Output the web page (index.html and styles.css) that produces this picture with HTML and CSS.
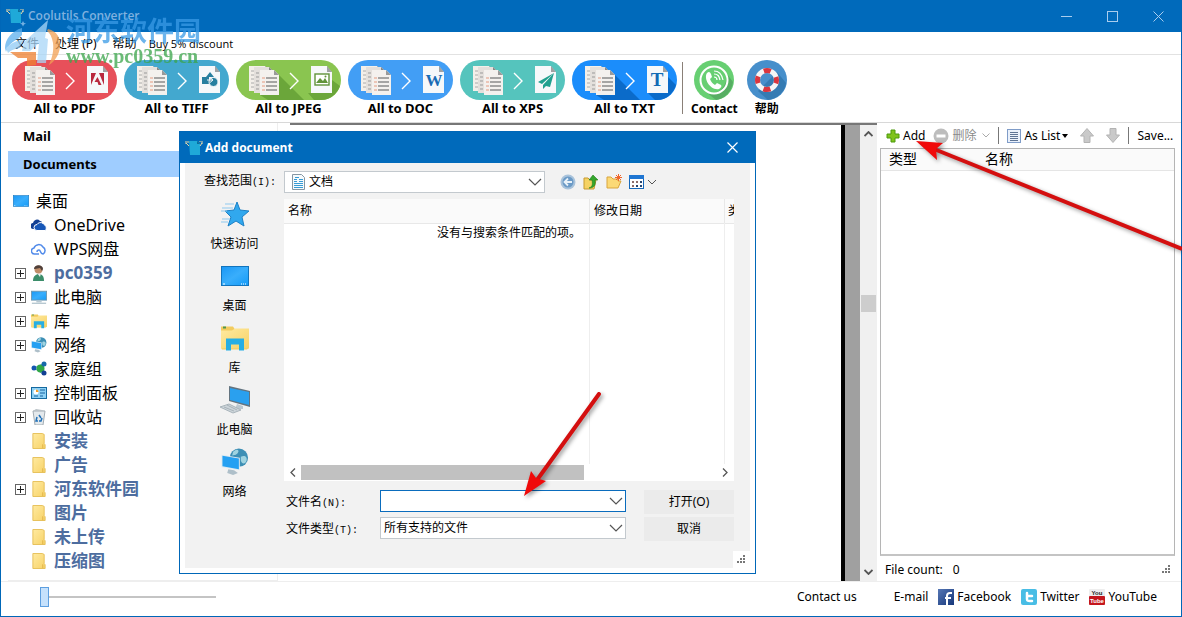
FILE: index.html
```
<!DOCTYPE html>
<html lang="zh-CN">
<head>
  <meta charset="UTF-8">
  <title>Coolutils Converter</title>
  <meta name="viewport" content="width=device-width, initial-scale=1.0">
  <link rel="stylesheet" href="styles.css">
</head>
<body>
  <!-- shared icons -->
  <svg class="sprite" aria-hidden="true">
    <defs>
      <linearGradient id="gBlue" x1="0" y1="0" x2="1" y2="1">
        <stop offset="0" stop-color="#1a97f5"/><stop offset=".5" stop-color="#39aefc"/><stop offset="1" stop-color="#149bf8"/>
      </linearGradient>
      <linearGradient id="gFolder" x1="0" y1="0" x2="1" y2="1">
        <stop offset="0" stop-color="#ffeaa0"/><stop offset="1" stop-color="#f7d267"/>
      </linearGradient>
      <linearGradient id="gFb" x1="0" y1="0" x2="1" y2="1">
        <stop offset="0" stop-color="#5677b5"/><stop offset="1" stop-color="#16377a"/>
      </linearGradient>
    </defs>
    <symbol id="pages" viewBox="0 0 32 32">
      <path d="M1 1h16l4 4v21H1z" fill="#f3efe9"/>
      <path d="M17 1l4 4h-4z" fill="#999"/>
      <path d="M3 6h3M3 10h3M3 14h3M3 18h3M3 22h3" stroke="#aaa" stroke-width="1"/>
      <path d="M6 2h15l4 4v22H6z" fill="#e4e0dc"/>
      <path d="M21 2l4 4h-4z" fill="#888"/>
      <path d="M8 8h3M8 12h3M8 16h3M8 20h3M8 24h3" stroke="#999" stroke-width="1"/>
      <path d="M12 5h14l5 5v20H12z" fill="#f4f1ee"/>
      <path d="M26 5l5 5h-5z" fill="#9a9a9a"/>
      <path d="M14 13h3M14 17h3M14 21h3M14 25h3" stroke="#e49a80" stroke-width="1"/>
      <path d="M18 13h11M18 17h11M18 21h11M18 25h11" stroke="#8c8c8c" stroke-width="1.6"/>
    </symbol>
    <symbol id="sheet" viewBox="0 0 21 27">
      <path d="M0 0h16l5 6v21H0z" fill="#f6f8fa"/>
      <path d="M16 0l5 6h-5z" fill="#000" opacity=".35"/>
    </symbol>
    <symbol id="app" viewBox="0 0 18 18">
      <path d="M4 2h8l3 3v11H5z" fill="#1fa9d8"/>
      <path d="M12 2l3 3h-3z" fill="#0b6f9c"/>
      <path d="M4 7L1 4M15 7l2-3M1 2v3M3 2v2M17 2v3M15 2v1" stroke="#e8d9a8" stroke-width="1" fill="none"/>
    </symbol>
    <symbol id="desktop" viewBox="0 0 28 20">
      <rect x=".5" y=".5" width="27" height="19" fill="url(#gBlue)" stroke="#1274bd"/>
      <path d="M2 18h2M20 18h1M22 18h1M24 18h1" stroke="#fff"/>
    </symbol>
    <symbol id="library" viewBox="0 0 28 25">
      <path d="M0 1h12l2 3h14v18l-2 2H1l-1-2z" fill="#f2cb5e"/>
      <path d="M0 5h11l3-2h14v20H0z" fill="url(#gFolder)"/>
      <path d="M2 2h3" stroke="#4f9650" stroke-width="2"/>
      <path d="M5 13h18v12h-5v-6h-8v6H5z" fill="#27aee3"/>
    </symbol>
    <symbol id="monitor" viewBox="0 0 18 16">
      <rect x=".5" y="1.5" width="17" height="10" fill="url(#gBlue)" stroke="#6f96ad"/>
      <path d="M6 12h6v2H6z" fill="#b8c8d2"/><path d="M1 15h16" stroke="#8fa9b8"/>
    </symbol>
    <symbol id="folder" viewBox="0 0 14 17">
      <path d="M.5.5h10l2 1v10l1 1v4H.5z" fill="url(#gFolder)" stroke="#e5be55"/>
      <path d="M11 12v4" stroke="#e0b144"/>
    </symbol>
    <symbol id="chevron" viewBox="0 0 14 8">
      <path d="M1 1l6 6 6-6" fill="none" stroke="#555" stroke-width="1.2"/>
    </symbol>
    <symbol id="netpc" viewBox="0 0 28 29">
      <circle cx="18" cy="10" r="9.5" fill="#3d8fb5"/>
      <path d="M12 4c4-4 7-2 5 1s-4 2-6 3zM20 9c4-2 7 0 6 4s-5 4-6 0z" fill="#9fd3e0"/>
      <path d="M0 7l19 3v13L0 20z" fill="#dceaf2"/>
      <path d="M1 8l17 3v11L1 19z" fill="#25a0f2"/>
      <path d="M7 22l6 1 4 3-5 2-6-2z" fill="#aebfc9"/>
    </symbol>
    <symbol id="grip" viewBox="0 0 9 9">
      <path d="M6 0h2v2H6zM3 3h2v2H3zM6 3h2v2H6zM0 6h2v2H0zM3 6h2v2H3zM6 6h2v2H6z" fill="#777"/>
    </symbol>
    <symbol id="move" viewBox="0 0 14 15">
      <path d="M7 .5L13.5 8H10v6.500H4V8H.5z" fill="#c9c9c9" stroke="#b3b3b3"/>
    </symbol>
  </svg>

  <div class="window">
    <header class="titlebar">
      <svg class="app-icon"><use href="#app"/></svg>
      <h1>Coolutils Converter</h1>
      <button class="win-btn" aria-label="Minimize"><svg width="11" height="11"><path d="M0 5.500h11" stroke="#a9cdee"/></svg></button>
      <button class="win-btn" aria-label="Maximize"><svg width="11" height="11"><rect x=".5" y=".5" width="10" height="10" fill="none" stroke="#a9cdee"/></svg></button>
      <button class="win-btn" aria-label="Close"><svg width="11" height="11"><path d="M.5.5l10 10M10.500.5l-10 10" stroke="#a9cdee"/></svg></button>
    </header>

    <nav class="menu">
      <button>文件</button>
      <button>处理 (P)</button>
      <button>帮助</button>
      <button class="promo">Buy 5% discount</button>
    </nav>

    <div class="toolbar">
      <button class="convert">
        <svg viewBox="0 0 105 40">
          <rect width="105" height="40" rx="20" fill="#e7505a"/>
          <use href="#pages" x="12" y="5" width="32" height="32"/>
          <path d="M54 13l8 8-8 8" fill="none" stroke="#fff" stroke-width="1.4"/>
          <use href="#sheet" x="75" y="6" width="21" height="27"/>
          <path d="M79 13h5l-5 12zM87 13h5v12zM85.500 17l4 8h-3l-1-3h-3z" fill="#b9283e"/>
        </svg>
        All to PDF
      </button>
      <button class="convert">
        <svg viewBox="0 0 105 40">
          <rect width="105" height="40" rx="20" fill="#43a8cf"/>
          <use href="#pages" x="12" y="5" width="32" height="32"/>
          <path d="M54 13l8 8-8 8" fill="none" stroke="#fff" stroke-width="1.4"/>
          <use href="#sheet" x="75" y="6" width="21" height="27"/>
          <path d="M78 17h7v7h-7zM82 17l4-5 4 5z" fill="#277f9f"/>
          <circle cx="89.500" cy="22" r="4.500" fill="#277f9f" stroke="#f6f8fa"/>
          <path d="M83 20h5M86 17.500l3 2.500-3 2.500" stroke="#f6f8fa" fill="none"/>
        </svg>
        All to TIFF
      </button>
      <button class="convert">
        <svg viewBox="0 0 105 40">
          <rect width="105" height="40" rx="20" fill="#8ac550"/>
          <path d="M43 15l25 25H32l-8-5 19-1zM96 20l8 6c-3 8-10 14-19 14h-7l-6-7h24z" fill="#6ba63a"/>
          <use href="#pages" x="12" y="5" width="32" height="32"/>
          <path d="M54 13l8 8-8 8" fill="none" stroke="#fff" stroke-width="1.4"/>
          <use href="#sheet" x="75" y="6" width="21" height="27"/>
          <rect x="79" y="14" width="14" height="11" fill="#fff" stroke="#60933a" stroke-width="1.400"/>
          <path d="M80 23l4-5 3 3 2-3 3 5z" fill="#60933a"/><circle cx="89.500" cy="16.500" r="1" fill="#60933a"/>
        </svg>
        All to JPEG
      </button>
      <button class="convert">
        <svg viewBox="0 0 105 40">
          <rect width="105" height="40" rx="20" fill="#429ef5"/>
          <use href="#pages" x="12" y="5" width="32" height="32"/>
          <path d="M54 13l8 8-8 8" fill="none" stroke="#fff" stroke-width="1.4"/>
          <use href="#sheet" x="75" y="6" width="21" height="27"/>
          <text class="glyph" x="86" y="26" font-size="17" fill="#1a6bb4">W</text>
        </svg>
        All to DOC
      </button>
      <button class="convert">
        <svg viewBox="0 0 105 40">
          <rect width="105" height="40" rx="20" fill="#55c4bd"/>
          <use href="#pages" x="12" y="5" width="32" height="32"/>
          <path d="M54 13l8 8-8 8" fill="none" stroke="#fff" stroke-width="1.4"/>
          <use href="#sheet" x="75" y="6" width="21" height="27"/>
          <path d="M94 13L78 22l4 2zM94 13L83 25v4l3-3 4 1z" fill="#21a08f"/>
        </svg>
        All to XPS
      </button>
      <button class="convert">
        <svg viewBox="0 0 105 40">
          <rect width="105" height="40" rx="20" fill="#1b8dfb"/>
          <path d="M43 15l25 25H32l-8-5 19-1zM96 17l8 8c-3 9-10 15-19 15h-2l-7-7h20z" fill="#0b6bc9"/>
          <use href="#pages" x="12" y="5" width="32" height="32"/>
          <path d="M54 13l8 8-8 8" fill="none" stroke="#fff" stroke-width="1.4"/>
          <use href="#sheet" x="75" y="6" width="21" height="27"/>
          <text class="glyph" x="85" y="26" font-size="19" fill="#126bb5">T</text>
        </svg>
        All to TXT
      </button>
      <div class="divider"></div>
      <button class="round">
        <svg viewBox="0 0 40 40">
          <circle cx="20" cy="20" r="20" fill="#67cf72"/>
          <path d="M33 14l6 8c-1 9-8 17-17 18l-10-8c10 4 21-3 21-18z" fill="#57ae63"/>
          <circle cx="20" cy="20" r="13.500" fill="none" stroke="#fff" stroke-width="2"/>
          <path d="M13 13c2-2 3-1 4 1l1 3-2 2c1 3 3 5 5 6l2-2 4 2c1 1 0 3-2 4-8 2-16-10-12-16z" fill="#fff"/>
          <path d="M20 17c2 0 3 1 3 3M20 14c4 0 5 2 6 6M20 11c6 0 8 4 9 9" fill="none" stroke="#fff" stroke-width="1.200"/>
        </svg>
        Contact
      </button>
      <button class="round">
        <svg viewBox="0 0 40 40">
          <circle cx="20" cy="20" r="20" fill="#478fcb"/>
          <path d="M30 12l9 11c-1 9-9 16-18 17l-10-9z" fill="#357bb3"/>
          <circle cx="20" cy="20" r="9.500" fill="none" stroke="#f5f5f5" stroke-width="5"/>
          <circle cx="20" cy="20" r="9.500" fill="none" stroke="#d9363f" stroke-width="5" stroke-dasharray="7 7.920" stroke-dashoffset="3.500"/>
        </svg>
        帮助
      </button>
    </div>

    <main class="workspace">
      <aside class="sidebar">
        <button class="tab">Mail</button>
        <button class="tab active">Documents</button>
        <ul class="tree">
          <li class="root"><svg width="16" height="12"><use href="#desktop"/></svg>桌面</li>
          <li><span class="toggle-space"></span><svg width="16" height="16" viewBox="0 0 16 16"><path d="M3 12a3 3 0 0 1-1-6 4 4 0 0 1 7-2 4 4 0 0 1 2 1L5 12z" fill="#123f93"/><path d="M6 13.500a3 3 0 0 1 0-6 4 4 0 0 1 6-1 3 3 0 0 1 2 2 3 3 0 0 1 0 5z" fill="#1757b8" stroke="#fff"/></svg>OneDrive</li>
          <li><span class="toggle-space"></span><svg width="16" height="16" viewBox="0 0 16 16"><path d="M8 13H4a3 3 0 0 1-1-6 5 5 0 0 1 9-1 4 4 0 0 1 0 7c-3 0-2-4-4-4s-2 2-2 2" fill="none" stroke="#528bea" stroke-width="1.500"/></svg>WPS网盘</li>
          <li class="strong"><button class="toggle" aria-label="展开"></button><svg width="16" height="16" viewBox="0 0 16 16"><path d="M2 16c0-5 3-7 6-7s5 2 5 7z" fill="#3b8d6a"/><path d="M6 8h4l-1 4z" fill="#eee"/><circle cx="7.500" cy="4.500" r="4" fill="#c08c68"/><path d="M3 4c0-5 9-5 9 0l-1 2-2-3-5 1z" fill="#50403a"/></svg>pc0359</li>
          <li><button class="toggle" aria-label="展开"></button><svg width="16" height="16"><use href="#monitor"/></svg>此电脑</li>
          <li><button class="toggle" aria-label="展开"></button><svg width="16" height="16"><use href="#library"/></svg>库</li>
          <li><button class="toggle" aria-label="展开"></button><svg width="16" height="16"><use href="#netpc"/></svg>网络</li>
          <li><span class="toggle-space"></span><svg width="16" height="16" viewBox="0 0 16 16"><path d="M3 7l9-4v10z" fill="none" stroke="#4c9bd0"/><circle cx="3" cy="7" r="2.500" fill="#1456b0"/><circle cx="9.500" cy="7.500" r="4" fill="#31a745"/><circle cx="13" cy="3" r="2.500" fill="#1768a8"/><circle cx="13" cy="12" r="2.500" fill="#123f93"/></svg>家庭组</li>
          <li><button class="toggle" aria-label="展开"></button><svg width="16" height="16" viewBox="0 0 16 16"><rect x=".5" y="2.500" width="15" height="11" fill="#8ed1f5" stroke="#15699f"/><circle cx="5" cy="7" r="2.500" fill="#fff"/><path d="M5 7V4.500A2.500 2.500 0 0 1 7.500 7z" fill="#f29a24"/><path d="M9 5h5M9 8h5M3 11h4M9 11h3" stroke="#1862a0"/></svg>控制面板</li>
          <li><button class="toggle" aria-label="展开"></button><svg width="16" height="16" viewBox="0 0 16 16"><path d="M2 2h12l-2 14H4z" fill="#e4e9ec" stroke="#a2acb3"/><path d="M2 2l3-2 6 1 3 1z" fill="#bac2c7"/><path d="M8 6l2 3M11 9l-1 3H8M7 12H5l1-4" fill="none" stroke="#2272b8" stroke-width="1.500"/></svg>回收站</li>
          <li class="strong"><span class="toggle-space"></span><svg width="16" height="16"><use href="#folder"/></svg>安装</li>
          <li class="strong"><span class="toggle-space"></span><svg width="16" height="16"><use href="#folder"/></svg>广告</li>
          <li class="strong"><button class="toggle" aria-label="展开"></button><svg width="16" height="16"><use href="#folder"/></svg>河东软件园</li>
          <li class="strong"><span class="toggle-space"></span><svg width="16" height="16"><use href="#folder"/></svg>图片</li>
          <li class="strong"><span class="toggle-space"></span><svg width="16" height="16"><use href="#folder"/></svg>未上传</li>
          <li class="strong"><span class="toggle-space"></span><svg width="16" height="16"><use href="#folder"/></svg>压缩图</li>
        </ul>
      </aside>

      <section class="preview">
        <div class="page"></div>
        <div class="page-edge"></div>
        <div class="vscroll">
          <svg width="9" height="6"><path d="M.5 5l4-4 4 4" fill="none" stroke="#555" stroke-width="1.800"/></svg>
          <div class="vthumb"></div>
          <svg width="9" height="6"><path d="M.5 1l4 4 4-4" fill="none" stroke="#555" stroke-width="1.800"/></svg>
        </div>
      </section>

      <section class="files">
        <div class="file-tools">
          <button><svg width="14" height="14"><path d="M5 1h4v4h4v4H9v4H5V9H1V5h4z" fill="#7fc31c" stroke="#4c9a0c"/></svg>Add</button>
          <button disabled><svg width="16" height="16"><circle cx="8" cy="8" r="7.500" fill="#bdbdbd"/><path d="M3.500 6.500h9v3h-9z" fill="#fff"/></svg>删除<svg class="tiny" width="8" height="5"><path d="M.5.5L4 4 7.500.5" fill="none" stroke="#aaa"/></svg></button>
          <div class="bar"></div>
          <button class="as-list"><svg width="14" height="14"><rect x=".5" y=".5" width="13" height="13" fill="#eaf1fb" stroke="#7f9cc8"/><path d="M3 3.500h8M3 5.500h8M3 7.500h8M3 9.500h8M3 11.500h8" stroke="#5e7494"/></svg>As List<svg class="drop" width="6" height="4"><path d="M0 0h6L3 4z"/></svg></button>
          <button class="arrow" aria-label="Up"><svg width="14" height="15"><use href="#move"/></svg></button>
          <button class="arrow down" aria-label="Down"><svg width="14" height="15"><use href="#move"/></svg></button>
          <div class="bar"></div>
          <button>Save...</button>
        </div>
        <div class="file-list">
          <table>
            <thead><tr><th class="type">类型</th><th>名称</th></tr></thead>
            <tbody></tbody>
          </table>
        </div>
        <div class="file-count">File count: <span>0</span><svg width="9" height="9"><use href="#grip"/></svg></div>
      </section>
    </main>

    <footer class="statusbar">
      <input class="zoom" type="range" min="0" max="100" value="0" aria-label="Zoom">
      <a class="contact" href="#">Contact us</a>
      <a href="#">E-mail</a>
      <a href="#"><svg width="16" height="16"><rect width="16" height="16" fill="url(#gFb)"/><path d="M14 4h-2c-2 0-3 1-3 3v9M7 9h6" fill="none" stroke="#fff" stroke-width="2"/></svg>Facebook</a>
      <a href="#"><svg width="16" height="16"><rect width="16" height="16" rx="2" fill="#48bde5"/><path d="M6 4v6c0 2 1 2 3 2h2M6 7h5" fill="none" stroke="#fff" stroke-width="2.500" stroke-linecap="round"/></svg>Twitter</a>
      <a href="#"><svg width="16" height="16"><rect width="16" height="16" rx="1" fill="#eee"/><rect y="7" width="16" height="9" rx="1" fill="#c4161c"/><text class="yt" x="8" y="6">You</text><text class="yt light" x="8" y="14">Tube</text></svg>YouTube</a>
    </footer>
  </div>

  <div class="dialog" role="dialog" aria-label="Add document">
    <div class="dialog-title">
      <svg class="app-icon"><use href="#app"/></svg>
      <h2>Add document</h2>
      <button class="win-btn" aria-label="关闭"><svg width="11" height="11"><path d="M.5.5l10 10M10.500.5l-10 10" stroke="#fff" stroke-width="1.200"/></svg></button>
    </div>
    <div class="dialog-body">
      <div class="look-in">
        <label for="lookIn">查找范围<span class="key">(I):</span></label>
        <div class="combo with-icon">
          <svg class="combo-icon" width="13" height="16" viewBox="0 0 13 16"><path d="M.5.5h9l3 3v12H.5z" fill="#f6fafc" stroke="#8496a3"/><path d="M3 3.500h4M2 5.500h3M7 5.500h4M2 7.500h3M7 7.500h4M2 9.500h9M2 11.500h9M2 13.500h9" stroke="#379bd4"/></svg>
          <select id="lookIn"><option>文档</option></select>
          <svg class="combo-arrow" width="14" height="8"><use href="#chevron"/></svg>
        </div>
        <div class="nav-tools">
          <button aria-label="后退"><svg width="16" height="16"><circle cx="8" cy="8" r="7.500" fill="#a9c3db"/><circle cx="8" cy="8" r="5.500" fill="#6b9ac6"/><path d="M12 8H5M8 4.500L4.500 8 8 11.500" fill="none" stroke="#e8f1f8" stroke-width="1.800"/></svg></button>
          <button aria-label="向上"><svg width="16" height="16"><path d="M1 4h4l2 2h6l-2 9H1z" fill="#f5d264" stroke="#c79a30"/><path d="M6 14c3-1 4-3 3-8H6l4-5 5 5h-3c1 5-1 8-6 8z" fill="#35a72d" stroke="#1e7d1a" stroke-width=".6"/></svg></button>
          <button aria-label="新建文件夹"><svg width="16" height="16"><path d="M1 3h4l2 2h5v2h3l-3 7H1z" fill="#fbd976" stroke="#d9a53c"/><path d="M12.500 0v7M9 3.500h7M10 1l5 5M15 1l-5 5" stroke="#f0652a"/></svg></button>
          <button aria-label="查看"><svg width="28" height="14"><rect x=".5" y=".5" width="14" height="13" fill="#fff" stroke="#1769bb"/><path d="M0 0h15v4H0z" fill="#1f76d2"/><path d="M3 6h2v2H3zM7 6h2v2H7zM3 10h2v2H3z" fill="#8d6d69"/><path d="M11 6h2v2h-2zM7 10h2v2H7zM11 10h2v2h-2z" fill="#27456f"/><path d="M19 5l4 4 4-4" fill="none" stroke="#555"/></svg></button>
        </div>
      </div>

      <div class="dialog-main">
        <div class="places">
          <button><svg width="28" height="28" viewBox="0 0 28 28"><path d="M16 2l3 8 9 1-7 6 2 9-8-5-8 5 3-9-6-6 9-1z" fill="#31a8ee" stroke="#1c80c5"/><path d="M4 4h9M1 8h11M0 11h6M1 19h8M0 22h7" stroke="#8fc9ef"/></svg>快速访问</button>
          <button><svg width="28" height="28"><use href="#desktop"/></svg>桌面</button>
          <button><svg width="28" height="28"><use href="#library"/></svg>库</button>
          <button><svg width="30" height="28" viewBox="0 0 30 28"><path d="M9 0l21 5v16L9 15z" fill="#637480"/><path d="M10 2l19 4v13l-19-5z" fill="#2aa0ef"/><path d="M17 18l6 2v3h-8z" fill="#bcc8d0"/><path d="M0 21l9-3 12 6-8 3z" fill="#cdd5da" stroke="#a9b4bb"/><path d="M4 21l10 4M7 19l10 5" stroke="#8f9ba3" stroke-width=".6"/></svg>此电脑</button>
          <button><svg width="28" height="28"><use href="#netpc"/></svg>网络</button>
        </div>

        <div class="dialog-content">
          <div class="listing">
            <table>
              <thead><tr><th>名称</th><th class="date">修改日期</th><th class="kind">类</th></tr></thead>
              <tbody><tr><td>没有与搜索条件匹配的项。</td><td></td><td></td></tr></tbody>
            </table>
            <div class="hscroll">
              <svg width="6" height="9"><path d="M5 .5l-4 4 4 4" fill="none" stroke="#555" stroke-width="1.300"/></svg>
              <div class="htrack"><div class="hthumb"></div></div>
              <svg width="6" height="9"><path d="M1 .5l4 4-4 4" fill="none" stroke="#555" stroke-width="1.300"/></svg>
            </div>
          </div>
          <form class="fields">
            <label for="fileName">文件名<span class="key">(N):</span></label>
            <div class="combo focus">
              <input id="fileName" type="text">
              <svg class="combo-arrow" width="14" height="8"><use href="#chevron"/></svg>
            </div>
            <button type="button">打开(O)</button>
            <label for="fileType">文件类型<span class="key">(T):</span></label>
            <div class="combo">
              <select id="fileType"><option>所有支持的文件</option></select>
              <svg class="combo-arrow" width="14" height="8"><use href="#chevron"/></svg>
            </div>
            <button type="button">取消</button>
          </form>
        </div>
      </div>
      <div class="resize"><svg width="9" height="9"><use href="#grip"/></svg></div>
    </div>
  </div>

  <!-- watermark -->
  <div class="watermark">
    <svg width="58" height="52" viewBox="0 0 58 52">
      <path d="M18 12C8 15 1 23 1 32l1 4c2-7 7-11 12-13l4-4z" fill="#5cb0ee"/>
      <path d="M2 32c5-5 11-8 18-8l-5 8c-4 1-8 2-11 5z" fill="#8fcaf5"/>
      <path d="M20 26L44 4l-3 18 3 1-2 24h-9l2-20-9 8h-8z" fill="#a9d6f7"/>
      <path d="M44 13c9 2 13 9 12 18-1 8-5 14-11 18 3-7 5-14 4-22-1-6-3-10-6-12z" fill="#f2a154"/>
      <path d="M6 36h26v13l-9 1v-8h-9z" fill="#ee8030"/>
      <path d="M19 5l1 2 2 .5-2 1-1 2-1-2-2-1 2-.5z" fill="#9cc9f0"/>
    </svg>
    <div class="watermark-text">
      <span class="mark-name">河东软件园</span>
      <span class="mark-url">www.pc0359.cn</span>
    </div>
  </div>

  <svg class="pointer to-add" width="268" height="116" viewBox="0 0 268 116">
    <path d="M20 10L268 110" stroke="#d40f0f" stroke-width="4"/>
    <path d="M2 2l27 2-7 6 1 11z" fill="#f00a0a"/>
  </svg>
  <svg class="pointer to-name" width="80" height="106" viewBox="0 0 80 106">
    <path d="M76 2L14 88" stroke="#d40f0f" stroke-width="4" stroke-linecap="round"/>
    <path d="M1 104l7-25 5 7 10 3z" fill="#f00a0a"/>
  </svg>
</body>
</html>
```
FILE: styles.css
```
* { box-sizing: border-box; }
body {
  margin: 0; position: relative; background: #fff; color: #000;
  font: 12px/16px "Noto Sans", "Noto Sans CJK SC", sans-serif;
}
button, input, select { font: inherit; color: inherit; }
button { padding: 0; border: none; background: none; }
a { color: inherit; text-decoration: none; }
svg { display: block; flex: none; }
table { border-collapse: collapse; width: 100%; table-layout: fixed; }
th { font-weight: normal; text-align: left; }
h1, h2 { margin: 0; font-size: 12px; font-family: "Open Sans", sans-serif; }
.sprite { position: absolute; width: 0; height: 0; }

.window {
  min-height: 100vh; display: flex; flex-direction: column;
  border: 1px solid #0067b8; border-top: none;
}

.titlebar, .dialog-title { display: flex; align-items: center; height: 32px; background: #006abb; color: #fff; }
.titlebar { padding-left: 5px; }
.titlebar h1 { flex: 1; padding-left: 4px; font-weight: 600; color: #7fb1df; }
.app-icon { width: 18px; height: 18px; }
.win-btn { width: 46px; height: 32px; display: flex; align-items: center; justify-content: center; }

.menu { display: flex; gap: 16px; height: 23px; padding: 1px 14px 0; border-bottom: 1px solid #e2e2e2; }
.menu .promo { margin-left: -4px; font-size: 11px; font-family: "Open Sans", sans-serif; }

.toolbar {
  display: flex; align-items: flex-start; gap: 7px; height: 68px; padding: 5px 11px 0;
  border-bottom: 1px solid #d8d8d8; font: bold 13px/17px "Noto Sans", "Noto Sans CJK SC", sans-serif;
}
.toolbar svg { height: 40px; }
.convert { width: 105px; }
.convert svg { width: 105px; }
.glyph { font-family: "Liberation Serif", serif; font-weight: bold; text-anchor: middle; }
.divider { height: 52px; border-left: 1px solid #8a8078; margin: 2px 1px 0 -2px; }
.round { margin-right: 2px; font-size: 12px; }
.round svg { width: 40px; margin: 0 auto; }

.workspace { flex: 1; display: flex; padding: 0 6px 0 7px; }

.sidebar { width: 270px; border-right: 1px solid #eee; border-bottom: 1px solid #eee; }
.tab { display: block; width: 100%; height: 26px; margin-bottom: 2px; padding-left: 15px; text-align: left; font-weight: bold; font-size: 13px; }
.tab.active { background: #9fcdff; }
.tree { list-style: none; margin: 12px 0 0; padding: 0; font: 16px/24px "Noto Sans", "Noto Sans CJK SC", sans-serif; }
.tree li { display: flex; align-items: center; gap: 7px; height: 24px; padding-left: 7px; }
.tree .root { padding-left: 5px; }
.tree .strong { font-size: 17px; font-weight: bold; color: #4d6d9f; }
.toggle, .toggle-space { width: 11px; height: 11px; margin-right: -2px; }
.toggle {
  border: 1px solid #666;
  background: linear-gradient(#222, #222) center / 7px 1px no-repeat, linear-gradient(#222, #222) center / 1px 7px no-repeat;
}

.preview { flex: 1; display: flex; margin-left: 12px; border-top: 2px solid #777; }
.page { flex: 1; background: #fff; border-right: 4px solid #000; }
.page-edge { width: 15px; background: #a0a0a0; }
.vscroll { width: 17px; display: flex; flex-direction: column; align-items: center; justify-content: space-between; padding: 6px 0; background: #f0f0f0; }
.vthumb { width: 15px; height: 17px; background: #cdcdcd; margin-bottom: 100px; }

.files { width: 298px; display: flex; flex-direction: column; padding-left: 3px; }
.file-tools { display: flex; align-items: center; height: 25px; padding: 0 2px 0 6px; gap: 8px; }
.file-tools button { display: flex; align-items: center; gap: 3px; white-space: nowrap; }
.file-tools button:disabled { color: #8a8a8a; }
.file-tools .tiny { margin-left: 3px; }
.file-tools .drop { margin-left: -1px; }
.file-tools .arrow { margin-left: 4px; }
.down svg { transform: rotate(180deg); }
.bar { height: 17px; border-left: 1px solid #777; }
.file-list { flex: 1; border: 1px solid #b5b5b5; border-bottom: 2px solid #c4c4c4; }
.file-list th { height: 21px; padding: 0 8px; background: #fafafa; border-bottom: 1px solid #e5e5e5; font-size: 14px; }
.file-list .type { width: 96px; }
.file-count { display: flex; align-items: center; height: 25px; padding: 2px 4px 0 5px; }
.file-count span { flex: 1; margin-left: 10px; }

.statusbar { display: flex; align-items: center; height: 35px; padding: 0 24px 4px 39px; gap: 10px; border-top: 1px solid #eee; }
.statusbar a { display: flex; align-items: center; gap: 3px; }
.statusbar .contact { margin-left: auto; margin-right: 27px; }
.zoom { appearance: none; width: 176px; height: 20px; margin: 0; background: linear-gradient(#c4c4c4, #c4c4c4) center / 100% 2px no-repeat; }
.zoom::-webkit-slider-thumb { appearance: none; width: 9px; height: 20px; background: #c5e1fc; border: 1px solid #5d9fe0; }
.yt { font: bold 6px "Liberation Sans", sans-serif; text-anchor: middle; fill: #222; }
.yt.light { fill: #fff; }

/* file dialog, floats over the main window */
.dialog { position: absolute; left: 179px; top: 131px; width: 577px; border: 1px solid #0067b8; background: #fff; }
.dialog-title { padding-left: 5px; height: 31px; }
.dialog-title h2 { flex: 1; padding-left: 2px; }
.dialog-body { margin: 0 5px 5px; background: #f2f2f2; padding: 8px 16px 0 0; }
.key { font: 10px/16px "Liberation Mono", monospace; }
.look-in { display: flex; align-items: center; }
.look-in label { width: 99px; padding-left: 19px; white-space: nowrap; }
.look-in .combo { width: 261px; }

.combo { display: grid; height: 22px; border: 1px solid #c3c9ce; background: #fff; }
.combo > * { grid-area: 1 / 1; }
.combo select, .combo input { appearance: none; width: 100%; height: 20px; padding: 0 3px; border: none; outline: none; background: none; }
.combo-arrow { justify-self: end; align-self: center; margin-right: 2px; pointer-events: none; }
.combo-icon { align-self: center; margin-left: 7px; }
.combo.with-icon select { padding-left: 24px; }
.combo.focus { border-color: #0a6cbd; }

.nav-tools { display: flex; align-items: center; gap: 7px; padding-left: 15px; }
.dialog-main { display: flex; margin-top: 6px; }
.places { width: 99px; }
.places button { display: flex; flex-direction: column; align-items: center; gap: 7px; width: 100%; height: 62px; padding-top: 1px; line-height: 18px; }
.dialog-content { flex: 1; min-width: 0; }
.listing { height: 282px; display: flex; flex-direction: column; background: #fff; }
.listing table { flex: 1; display: grid; grid-template-columns: 1fr; grid-template-rows: 24px 1fr; }
.listing thead, .listing tbody { display: grid; }
.listing tr { display: grid; grid-template-columns: 306px 135px 1fr; }
.listing th { padding: 4px; background: #fafafa; border-bottom: 1px solid #e8e8e8; border-right: 1px solid #e8e8e8; overflow: hidden; }
.listing td { padding: 2px 8px; border-right: 1px solid #eee; text-align: right; white-space: nowrap; }
.listing th:last-child, .listing td:last-child { border-right: none; padding-right: 0; padding-left: 3px; }
.hscroll { display: flex; align-items: center; height: 17px; padding: 0 6px; gap: 5px; }
.htrack { flex: 1; }
.hthumb { width: 68%; height: 15px; background: #c1c1c1; }
.fields { display: grid; grid-template-columns: 78px 246px 90px; column-gap: 18px; row-gap: 3px; margin-top: 9px; }
.fields label { padding: 4px 0 0 2px; white-space: nowrap; }
.fields button { height: 24px; background: #ebebeb; }
.resize { display: flex; align-items: center; justify-content: center; width: 17px; height: 17px; margin: 10px -16px 0 auto; background: #fff; }

.watermark { position: absolute; left: 4px; top: 16px; display: flex; pointer-events: none; opacity: .75; }
.watermark-text { display: flex; flex-direction: column; margin-left: 4px; }
.mark-name { font: bold 27px/28px "Noto Sans CJK SC", sans-serif; color: #3a9be6; }
.mark-url { font: bold 20px/24px "Liberation Serif", serif; color: #3aa54a; }

.pointer { position: absolute; pointer-events: none; filter: drop-shadow(2px 2px 2px rgba(0,0,0,0.4)); }
.to-add { right: 0; top: 139px; }
.to-name { left: 523px; top: 392px; }
```
